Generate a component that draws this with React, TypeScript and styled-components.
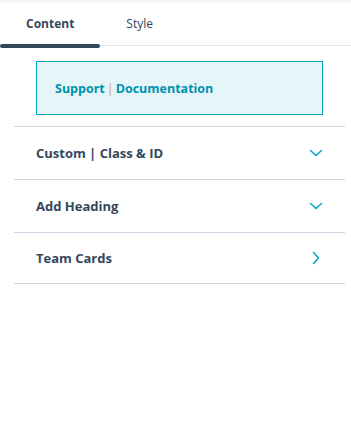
import React from "react";
import styled, { createGlobalStyle } from "styled-components";

const GlobalStyle = createGlobalStyle`
  html, body {
    margin: 0;
    padding: 0;
    background: #ffffff;
  }
  body {
    font-family: "Open Sans", "Liberation Sans", sans-serif;
    color: #33475b;
  }
`;

interface Section {
  label: string;
  open?: boolean;
}

const sections: Section[] = [
  { label: "Custom | Class & ID", open: true },
  { label: "Add Heading", open: true },
  { label: "Team Cards" },
];

const ChevronDown = () => (
  <svg width="14" height="8" viewBox="0 0 14 8" fill="none">
    <path d="M1.5 1.5L7 6.5L12.5 1.5" stroke="#00a4bd" strokeWidth="1.5" strokeLinecap="round" strokeLinejoin="round" />
  </svg>
);

const ChevronRight = () => (
  <svg width="8" height="14" viewBox="0 0 8 14" fill="none">
    <path d="M1.5 1.5L6.5 7L1.5 12.5" stroke="#00a4bd" strokeWidth="1.5" strokeLinecap="round" strokeLinejoin="round" />
  </svg>
);

const App: React.FC = () => {
  return (
    <>
      <GlobalStyle />
      <Panel>
        <TopStrip />
        <Tabs>
          <Tab $active>Content</Tab>
          <Tab>Style</Tab>
        </Tabs>
        <Body>
          <InfoBox>
            <InfoLink>Support</InfoLink>
            <Pipe>|</Pipe>
            <InfoLink>Documentation</InfoLink>
          </InfoBox>
          <List>
            {sections.map((s) => (
              <Row key={s.label} $height={s.open ? 52 : 50}>
                <RowLabel>{s.label}</RowLabel>
                <IconSlot>{s.open ? <ChevronDown /> : <ChevronRight />}</IconSlot>
              </Row>
            ))}
          </List>
        </Body>
      </Panel>
    </>
  );
};

export default App;

const Panel = styled.div`
  width: 351px;
  min-height: 442px;
  background: #ffffff;
`;

const TopStrip = styled.div`
  height: 3px;
  background: #f5f8fa;
`;

const Tabs = styled.div`
  display: flex;
  height: 43px;
  border-bottom: 1px solid #dfe3eb;
  box-sizing: border-box;
`;

const Tab = styled.div<{ $active?: boolean }>`
  position: relative;
  display: flex;
  align-items: center;
  padding: 0 26px 1px;
  font-size: 12px;
  font-weight: ${(p) => (p.$active ? 700 : 400)};
  color: #33475b;

  &::after {
    content: "";
    display: ${(p) => (p.$active ? "block" : "none")};
    position: absolute;
    left: 0;
    right: 0;
    bottom: -3px;
    height: 4px;
    border-radius: 2px;
    background: #33475b;
  }
`;

const Body = styled.div`
  padding: 15px 6px 0 14px;
`;

const InfoBox = styled.div`
  margin: 0 22px 11px 22px;
  height: 54px;
  box-sizing: border-box;
  border: 1px solid #00a4bd;
  background: #e5f5f8;
  display: flex;
  align-items: center;
  padding: 0 18px 0 18px;
  font-size: 12.5px;
  font-weight: 700;
`;

const InfoLink = styled.span`
  color: #0091ae;
`;

const Pipe = styled.span`
  color: #c9a27c;
  font-weight: 400;
  margin: 0 2px;
`;

const List = styled.div`
  border-top: 1px solid #cbd6e2;
`;

const Row = styled.div<{ $height: number }>`
  display: flex;
  align-items: center;
  justify-content: space-between;
  height: ${(p) => p.$height}px;
  border-bottom: 1px solid #cbd6e2;
  padding: 0 22px 0 22px;
`;

const RowLabel = styled.span`
  font-size: 13px;
  font-weight: 700;
  color: #33475b;
`;

const IconSlot = styled.span`
  display: flex;
  align-items: center;
  justify-content: center;
  width: 14px;
  height: 14px;
`;
